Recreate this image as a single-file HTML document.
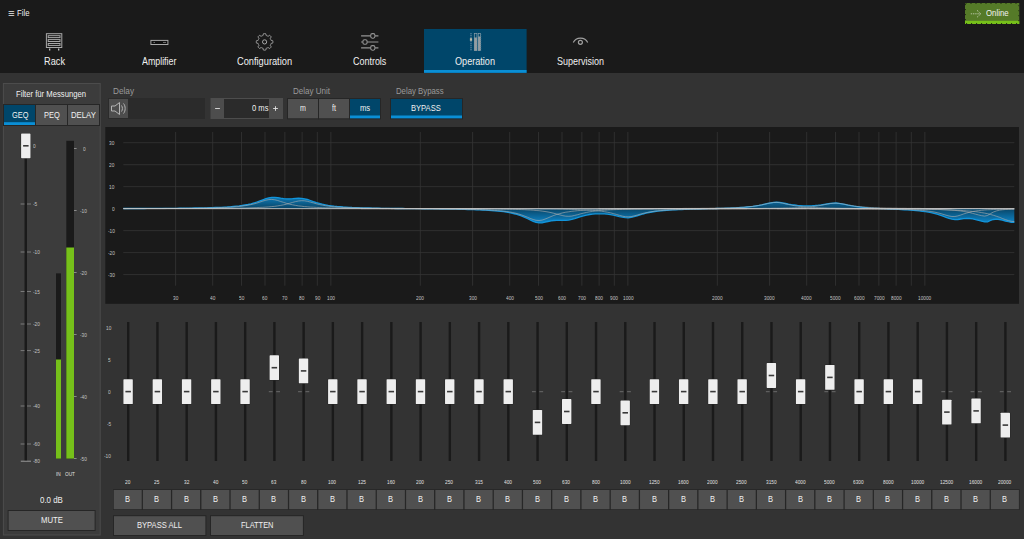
<!DOCTYPE html>
<html><head><meta charset="utf-8"><title>Operation</title><style>*{box-sizing:border-box;margin:0;padding:0}
html,body{width:1024px;height:539px;overflow:hidden;background:#333;font-family:"Liberation Sans",sans-serif;color:#e6e6e6}
svg{position:absolute;left:0;top:0}
.t{position:absolute;white-space:nowrap;line-height:1;transform-origin:0 0}
</style></head><body>
<svg width="1024" height="539" viewBox="0 0 1024 539">
<rect x="0" y="0" width="1024" height="73" fill="#1a1a1a"/>
<rect x="965" y="3" width="54.3" height="21" fill="#557a28"/>
<rect x="965" y="20.8" width="54.3" height="3.2" fill="#76c01a"/>
<path d="M965.5 3.5H1018.8V23.5H965.5Z" fill="none" stroke="#20300f" stroke-width="1" stroke-dasharray="1 4"/>
<path d="M970.8 13.8H980.5M977 10.3L980.8 13.8L977 17.3" fill="none" stroke="#b4c3a0" stroke-width="1" stroke-dasharray="1.4 0.8"/>
<rect x="424" y="29" width="102.6" height="44" fill="#00466a"/>
<rect x="424" y="70" width="102.6" height="2.8" fill="#0a8fd6"/>
<g fill="none" stroke="#a8a8a8" stroke-width="1">
<rect x="46.4" y="33.7" width="15.4" height="13.8"/>
<rect x="48.2" y="35.7" width="11.8" height="1.9" fill="#0e0e0e"/>
<rect x="48.2" y="39.6" width="11.8" height="1.9" fill="#0e0e0e"/>
<rect x="48.2" y="43.5" width="11.8" height="1.9" fill="#0e0e0e"/>
<path d="M49.7 48.4v2M58.7 48.4v2" stroke="#d0d0d0" stroke-width="1.2"/>
<rect x="150.9" y="40.4" width="17" height="4.1" fill="#101010"/>
<path d="M153.5 42.45h1.5M163 42.45h3" stroke="#707070"/>
<path d="M264.6 33.6L264.9 33.6L265.1 33.6L265.4 33.7L265.7 33.7L265.9 34.1L266.0 34.9L266.1 35.4L266.3 35.5L266.5 35.6L266.7 35.7L266.9 35.7L267.1 35.8L267.3 35.9L267.5 36.0L267.7 36.1L267.9 36.2L268.1 36.2L268.6 36.0L269.2 35.5L269.6 35.4L269.9 35.5L270.1 35.7L270.3 35.8L270.5 36.0L270.7 36.2L270.8 36.4L271.0 36.6L271.1 36.9L271.0 37.3L270.5 37.9L270.3 38.4L270.3 38.6L270.4 38.8L270.5 39.0L270.6 39.2L270.7 39.4L270.8 39.6L270.8 39.8L270.9 40.0L271.0 40.2L271.1 40.4L271.6 40.5L272.4 40.6L272.8 40.8L272.8 41.1L272.9 41.4L272.9 41.6L272.9 41.9L272.9 42.2L272.9 42.4L272.8 42.7L272.8 43.0L272.4 43.2L271.6 43.3L271.1 43.4L271.0 43.6L270.9 43.8L270.8 44.0L270.8 44.2L270.7 44.4L270.6 44.6L270.5 44.8L270.4 45.0L270.3 45.2L270.3 45.4L270.5 45.9L271.0 46.5L271.1 46.9L271.0 47.2L270.8 47.4L270.7 47.6L270.5 47.8L270.3 48.0L270.1 48.1L269.9 48.3L269.6 48.4L269.2 48.3L268.6 47.8L268.1 47.6L267.9 47.6L267.7 47.7L267.5 47.8L267.3 47.9L267.1 48.0L266.9 48.1L266.7 48.1L266.5 48.2L266.3 48.3L266.1 48.4L266.0 48.9L265.9 49.7L265.7 50.1L265.4 50.1L265.1 50.2L264.9 50.2L264.6 50.2L264.3 50.2L264.1 50.2L263.8 50.1L263.5 50.1L263.3 49.7L263.2 48.9L263.1 48.4L262.9 48.3L262.7 48.2L262.5 48.1L262.3 48.1L262.1 48.0L261.9 47.9L261.7 47.8L261.5 47.7L261.3 47.6L261.1 47.6L260.6 47.8L260.0 48.3L259.6 48.4L259.3 48.3L259.1 48.1L258.9 48.0L258.7 47.8L258.5 47.6L258.4 47.4L258.2 47.2L258.1 46.9L258.2 46.5L258.7 45.9L258.9 45.4L258.9 45.2L258.8 45.0L258.7 44.8L258.6 44.6L258.5 44.4L258.4 44.2L258.4 44.0L258.3 43.8L258.2 43.6L258.1 43.4L257.6 43.3L256.8 43.2L256.4 43.0L256.4 42.7L256.3 42.4L256.3 42.2L256.3 41.9L256.3 41.6L256.3 41.4L256.4 41.1L256.4 40.8L256.8 40.6L257.6 40.5L258.1 40.4L258.2 40.2L258.3 40.0L258.4 39.8L258.4 39.6L258.5 39.4L258.6 39.2L258.7 39.0L258.8 38.8L258.9 38.6L258.9 38.4L258.7 37.9L258.2 37.3L258.1 36.9L258.2 36.6L258.4 36.4L258.5 36.2L258.7 36.0L258.9 35.8L259.1 35.7L259.3 35.5L259.6 35.4L260.0 35.5L260.6 36.0L261.1 36.2L261.3 36.2L261.5 36.1L261.7 36.0L261.9 35.9L262.1 35.8L262.3 35.7L262.5 35.7L262.7 35.6L262.9 35.5L263.1 35.4L263.2 34.9L263.3 34.1L263.5 33.7L263.8 33.7L264.1 33.6L264.3 33.6Z"/><circle cx="264.6" cy="41.9" r="2.1"/>
<g stroke-width="1.1" stroke="#949494"><path d="M361.1 35.9h9.4M375.1 35.9h3.3M361.1 42h1.6M367.3 42h11.1M361.1 47.9h9.4M375.1 47.9h3.3"/><rect x="370.7" y="33.6" width="4.2" height="4.6" rx="1.6"/><rect x="362.9" y="39.7" width="4.2" height="4.6" rx="1.6"/><rect x="370.7" y="45.6" width="4.2" height="4.6" rx="1.6"/></g>
<path d="M471 33.2v17.4" stroke="#7f9db3" stroke-dasharray="1 1" stroke-width="1.2"/>
<rect x="469.9" y="38.2" width="2.2" height="2.6" fill="#b9b9aa" stroke="none"/>
<rect x="474.3" y="33.4" width="2.6" height="17.2" stroke="#8a9ea9" stroke-width="0.7"/><rect x="474.2" y="37.5" width="2.8" height="13.2" fill="#939da2" stroke="none"/>
<rect x="478.2" y="33.4" width="2.4" height="17.2" stroke="#8a9ea9" stroke-width="0.7"/><rect x="478.1" y="36.5" width="2.6" height="14.2" fill="#939da2" stroke="none"/>
<path d="M477.4 34v16.5M481 34v16.5" stroke="#2f6d8f" stroke-dasharray="0.8 1.2" stroke-width="0.7"/>
<g stroke-width="1.2" stroke="#a0a0a0"><path d="M573.3 42.6C576 36.6 585 36.6 587.7 42.6"/><circle cx="580.4" cy="42.3" r="2"/></g>
</g>
<rect x="2.9" y="83" width="97.8" height="452.5" fill="#4c4c4c"/>
<rect x="3.9" y="84" width="95.8" height="450.5" fill="#3c3c3c"/>
<rect x="3" y="104" width="33" height="22" fill="#262626"/>
<rect x="4" y="105" width="31" height="20" fill="#00466a"/>
<rect x="4" y="122.2" width="31" height="2.8" fill="#0a8fd6"/>
<rect x="35" y="104" width="33" height="22" fill="#262626"/>
<rect x="36" y="105" width="31" height="20" fill="#505050"/>
<rect x="67" y="104" width="33" height="22" fill="#262626"/>
<rect x="68" y="105" width="31" height="20" fill="#505050"/>
<rect x="24.5" y="146" width="2.5" height="315" fill="#1a1a1a"/>
<rect x="20.6" y="145.5" width="3.9" height="1" fill="#6fa82a"/>
<rect x="27" y="145.5" width="4" height="1" fill="#6fa82a"/>
<rect x="20.6" y="203.5" width="3.9" height="1" fill="#7a7a7a"/>
<rect x="27" y="203.5" width="4" height="1" fill="#7a7a7a"/>
<rect x="20.6" y="251.5" width="3.9" height="1" fill="#7a7a7a"/>
<rect x="27" y="251.5" width="4" height="1" fill="#7a7a7a"/>
<rect x="20.6" y="291" width="3.9" height="1" fill="#7a7a7a"/>
<rect x="27" y="291" width="4" height="1" fill="#7a7a7a"/>
<rect x="20.6" y="323.5" width="3.9" height="1" fill="#7a7a7a"/>
<rect x="27" y="323.5" width="4" height="1" fill="#7a7a7a"/>
<rect x="20.6" y="350.1" width="3.9" height="1" fill="#7a7a7a"/>
<rect x="27" y="350.1" width="4" height="1" fill="#7a7a7a"/>
<rect x="20.6" y="405.5" width="3.9" height="1" fill="#7a7a7a"/>
<rect x="27" y="405.5" width="4" height="1" fill="#7a7a7a"/>
<rect x="20.6" y="443.5" width="3.9" height="1" fill="#7a7a7a"/>
<rect x="27" y="443.5" width="4" height="1" fill="#7a7a7a"/>
<rect x="20.8" y="460.7" width="10.2" height="1" fill="#9a9a9a"/>
<rect x="20.7" y="133" width="10.2" height="25.6" fill="#242424" rx="1"/>
<rect x="21.1" y="133.4" width="9.4" height="24.8" fill="#eeeeee" rx="0.6"/>
<rect x="23.1" y="145" width="5.5" height="1.6" fill="#3a3a3a"/>
<rect x="56" y="273.4" width="5" height="185.2" fill="#1a1a1a"/>
<rect x="56" y="359.5" width="5" height="99.1" fill="#76c01a"/>
<rect x="66.3" y="140.8" width="7.7" height="317.8" fill="#1a1a1a"/>
<rect x="66.3" y="247.5" width="7.7" height="211.1" fill="#76c01a"/>
<rect x="74" y="148" width="2.6" height="1" fill="#8a8a8a"/>
<rect x="74" y="210" width="2.6" height="1" fill="#8a8a8a"/>
<rect x="74" y="272" width="2.6" height="1" fill="#8a8a8a"/>
<rect x="74" y="334" width="2.6" height="1" fill="#8a8a8a"/>
<rect x="74" y="396" width="2.6" height="1" fill="#8a8a8a"/>
<rect x="74" y="458" width="2.6" height="1" fill="#8a8a8a"/>
<rect x="7.6" y="510" width="88" height="21" fill="#262626"/>
<rect x="8.6" y="511" width="86" height="19" fill="#505050"/>
<rect x="108" y="98" width="97" height="21" fill="#2b2b2b"/>
<rect x="109" y="99" width="19" height="19" fill="#4d4d4d"/>
<g fill="none" stroke="#b4b4b4" stroke-width="1"><path d="M111.500 106v5h3.500l4.500 3.500v-12L115 106z"/><path d="M121.500 105.500c1.200 1.500 1.200 4.500 0 6M123.500 103.500c2.200 2.500 2.200 7.500 0 10"/></g>
<rect x="210.5" y="98" width="72.5" height="21" fill="#4d4d4d"/>
<rect x="224" y="99" width="45" height="19" fill="#2b2b2b"/>
<rect x="215.1" y="108.1" width="4.8" height="0.9" fill="#e0e0e0"/>
<rect x="273.1" y="108.1" width="4.8" height="0.9" fill="#e0e0e0"/>
<rect x="275.05" y="106.2" width="0.9" height="4.7" fill="#e0e0e0"/>
<rect x="287" y="98" width="32" height="21.3" fill="#262626"/>
<rect x="288" y="99" width="30" height="19.3" fill="#505050"/>
<rect x="318" y="98" width="32" height="21.3" fill="#262626"/>
<rect x="319" y="99" width="30" height="19.3" fill="#505050"/>
<rect x="349" y="98" width="32" height="21.3" fill="#262626"/>
<rect x="350" y="99" width="30" height="19.3" fill="#00466a"/>
<rect x="350" y="115.5" width="30" height="2.8" fill="#0a8fd6"/>
<rect x="390" y="98" width="73" height="21.3" fill="#262626"/>
<rect x="391" y="99" width="71" height="19.3" fill="#00466a"/>
<rect x="391" y="115.5" width="71" height="2.8" fill="#0a8fd6"/>
<rect x="105.3" y="127" width="913.7" height="176.8" fill="#1a1a1a"/>
<g stroke="#353535" stroke-width="0.8" fill="none">
<path d="M123.3 274.59H1014.3"/>
<path d="M123.3 252.61H1014.3"/>
<path d="M123.3 230.63H1014.3"/>
<path d="M123.3 208.65H1014.3"/>
<path d="M123.3 186.67H1014.3"/>
<path d="M123.3 164.69H1014.3"/>
<path d="M123.3 142.71H1014.3"/>
<path d="M175.60 132V285.7"/>
<path d="M212.71 132V285.7"/>
<path d="M241.49 132V285.7"/>
<path d="M265.01 132V285.7"/>
<path d="M284.89 132V285.7"/>
<path d="M302.11 132V285.7"/>
<path d="M317.30 132V285.7"/>
<path d="M330.89 132V285.7"/>
<path d="M420.30 132V285.7"/>
<path d="M472.60 132V285.7"/>
<path d="M509.71 132V285.7"/>
<path d="M538.49 132V285.7"/>
<path d="M562.01 132V285.7"/>
<path d="M581.89 132V285.7"/>
<path d="M599.11 132V285.7"/>
<path d="M614.30 132V285.7"/>
<path d="M627.89 132V285.7"/>
<path d="M717.30 132V285.7"/>
<path d="M769.60 132V285.7"/>
<path d="M806.71 132V285.7"/>
<path d="M835.49 132V285.7"/>
<path d="M859.01 132V285.7"/>
<path d="M878.89 132V285.7"/>
<path d="M896.11 132V285.7"/>
<path d="M911.30 132V285.7"/>
<path d="M924.89 132V285.7"/>
</g>
<defs><linearGradient id="bg" gradientUnits="userSpaceOnUse" x1="0" y1="194.4" x2="0" y2="222.9"><stop offset="0" stop-color="#0f86c8"/><stop offset="0.3" stop-color="#0b5f8e"/><stop offset="0.5" stop-color="#0a4566"/><stop offset="0.7" stop-color="#0b5f8e"/><stop offset="1" stop-color="#0f86c8"/></linearGradient></defs>
<polygon points="123.3,208.65 123.3,208.5 126.3,208.5 129.2,208.5 132.2,208.5 135.2,208.5 138.1,208.5 141.1,208.5 144.1,208.5 147.1,208.4 150.0,208.4 153.0,208.4 156.0,208.4 158.9,208.4 161.9,208.4 164.9,208.3 167.8,208.3 170.8,208.3 173.8,208.3 176.8,208.3 179.7,208.2 182.7,208.2 185.7,208.2 188.6,208.1 191.6,208.1 194.6,208.0 197.5,208.0 200.5,207.9 203.5,207.9 206.5,207.8 209.4,207.7 212.4,207.6 215.4,207.5 218.3,207.4 221.3,207.3 224.3,207.1 227.2,207.0 230.2,206.8 233.2,206.5 236.2,206.2 239.1,205.9 242.1,205.5 245.1,205.0 248.0,204.5 251.0,203.8 254.0,203.0 256.9,202.0 259.9,200.9 262.9,199.8 265.9,198.7 268.8,197.8 271.8,197.4 274.8,197.4 277.7,197.7 280.7,198.2 283.7,198.6 286.7,198.8 289.6,198.8 292.6,198.7 295.6,198.4 298.5,198.2 301.5,198.3 304.5,198.8 307.4,199.5 310.4,200.5 313.4,201.6 316.4,202.6 319.3,203.4 322.3,204.2 325.3,204.8 328.2,205.4 331.2,205.8 334.2,206.2 337.1,206.5 340.1,206.7 343.1,207.0 346.1,207.1 349.0,207.3 352.0,207.5 355.0,207.6 357.9,207.7 360.9,207.8 363.9,207.9 366.8,208.0 369.8,208.0 372.8,208.1 375.8,208.2 378.7,208.2 381.7,208.3 384.7,208.3 387.6,208.3 390.6,208.4 393.6,208.4 396.5,208.5 399.5,208.5 402.5,208.5 405.4,208.6 408.4,208.6 411.4,208.6 414.4,208.7 417.3,208.7 420.3,208.7 423.3,208.8 426.2,208.8 429.2,208.8 432.2,208.9 435.2,208.9 438.1,208.9 441.1,209.0 444.1,209.0 447.0,209.1 450.0,209.1 453.0,209.2 455.9,209.2 458.9,209.3 461.9,209.4 464.8,209.4 467.8,209.5 470.8,209.6 473.8,209.7 476.7,209.8 479.7,209.9 482.7,210.0 485.6,210.2 488.6,210.4 491.6,210.6 494.6,210.8 497.5,211.1 500.5,211.4 503.5,211.7 506.4,212.2 509.4,212.7 512.4,213.3 515.3,214.0 518.3,214.9 521.3,215.9 524.2,217.1 527.2,218.5 530.2,219.9 533.2,221.3 536.1,222.4 539.1,222.9 542.1,222.8 545.0,222.2 548.0,221.5 551.0,220.9 553.9,220.5 556.9,220.3 559.9,220.3 562.9,220.4 565.8,220.3 568.8,220.1 571.8,219.4 574.7,218.6 577.7,217.6 580.7,216.6 583.6,215.8 586.6,215.1 589.6,214.5 592.6,214.1 595.5,213.9 598.5,213.8 601.5,213.8 604.4,213.9 607.4,214.2 610.4,214.6 613.3,215.1 616.3,215.8 619.3,216.6 622.3,217.2 625.2,217.7 628.2,217.8 631.2,217.4 634.1,216.7 637.1,215.8 640.1,214.9 643.0,214.0 646.0,213.2 649.0,212.5 652.0,212.0 654.9,211.5 657.9,211.1 660.9,210.8 663.8,210.5 666.8,210.3 669.8,210.1 672.8,209.9 675.7,209.8 678.7,209.6 681.7,209.5 684.6,209.4 687.6,209.3 690.6,209.2 693.5,209.1 696.5,209.0 699.5,209.0 702.4,208.9 705.4,208.8 708.4,208.7 711.4,208.7 714.3,208.6 717.3,208.5 720.3,208.4 723.2,208.3 726.2,208.2 729.2,208.1 732.1,208.0 735.1,207.9 738.1,207.7 741.1,207.5 744.0,207.3 747.0,207.0 750.0,206.7 752.9,206.4 755.9,205.9 758.9,205.4 761.8,204.8 764.8,204.1 767.8,203.4 770.8,202.8 773.7,202.4 776.7,202.2 779.7,202.4 782.6,202.9 785.6,203.5 788.6,204.1 791.5,204.6 794.5,205.0 797.5,205.4 800.5,205.6 803.4,205.8 806.4,205.8 809.4,205.8 812.3,205.7 815.3,205.5 818.3,205.2 821.2,204.8 824.2,204.3 827.2,203.8 830.2,203.3 833.1,203.1 836.1,203.0 839.1,203.3 842.0,203.8 845.0,204.4 848.0,205.1 851.0,205.7 853.9,206.2 856.9,206.6 859.9,207.0 862.8,207.3 865.8,207.6 868.8,207.9 871.7,208.1 874.7,208.3 877.7,208.4 880.6,208.6 883.6,208.7 886.6,208.9 889.6,209.0 892.5,209.2 895.5,209.3 898.5,209.4 901.4,209.6 904.4,209.8 907.4,209.9 910.3,210.1 913.3,210.4 916.3,210.6 919.3,210.9 922.2,211.3 925.2,211.7 928.2,212.1 931.1,212.7 934.1,213.4 937.1,214.2 940.0,215.1 943.0,216.2 946.0,217.3 949.0,218.4 951.9,219.2 954.9,219.6 957.9,219.5 960.8,219.0 963.8,218.6 966.8,218.4 969.8,218.5 972.7,218.9 975.7,219.6 978.7,220.4 981.6,221.2 984.6,221.9 987.6,221.8 990.5,220.4 993.5,219.5 996.5,219.2 999.5,219.5 1002.4,220.2 1005.4,221.0 1008.4,221.7 1011.3,222.3 1014.3,222.4 1014.3,208.65" fill="url(#bg)"/>
<polyline points="123.3,208.5 126.3,208.5 129.2,208.5 132.2,208.5 135.2,208.5 138.1,208.5 141.1,208.5 144.1,208.5 147.1,208.4 150.0,208.4 153.0,208.4 156.0,208.4 158.9,208.4 161.9,208.4 164.9,208.3 167.8,208.3 170.8,208.3 173.8,208.3 176.8,208.3 179.7,208.2 182.7,208.2 185.7,208.2 188.6,208.1 191.6,208.1 194.6,208.0 197.5,208.0 200.5,207.9 203.5,207.9 206.5,207.8 209.4,207.7 212.4,207.6 215.4,207.5 218.3,207.4 221.3,207.3 224.3,207.1 227.2,207.0 230.2,206.8 233.2,206.5 236.2,206.2 239.1,205.9 242.1,205.5 245.1,205.0 248.0,204.5 251.0,203.8 254.0,203.0 256.9,202.0 259.9,200.9 262.9,199.8 265.9,198.7 268.8,197.8 271.8,197.4 274.8,197.4 277.7,197.7 280.7,198.2 283.7,198.6 286.7,198.8 289.6,198.8 292.6,198.7 295.6,198.4 298.5,198.2 301.5,198.3 304.5,198.8 307.4,199.5 310.4,200.5 313.4,201.6 316.4,202.6 319.3,203.4 322.3,204.2 325.3,204.8 328.2,205.4 331.2,205.8 334.2,206.2 337.1,206.5 340.1,206.7 343.1,207.0 346.1,207.1 349.0,207.3 352.0,207.5 355.0,207.6 357.9,207.7 360.9,207.8 363.9,207.9 366.8,208.0 369.8,208.0 372.8,208.1 375.8,208.2 378.7,208.2 381.7,208.3 384.7,208.3 387.6,208.3 390.6,208.4 393.6,208.4 396.5,208.5 399.5,208.5 402.5,208.5 405.4,208.6 408.4,208.6 411.4,208.6 414.4,208.7 417.3,208.7 420.3,208.7 423.3,208.8 426.2,208.8 429.2,208.8 432.2,208.9 435.2,208.9 438.1,208.9 441.1,209.0 444.1,209.0 447.0,209.1 450.0,209.1 453.0,209.2 455.9,209.2 458.9,209.3 461.9,209.4 464.8,209.4 467.8,209.5 470.8,209.6 473.8,209.7 476.7,209.8 479.7,209.9 482.7,210.0 485.6,210.2 488.6,210.4 491.6,210.6 494.6,210.8 497.5,211.1 500.5,211.4 503.5,211.7 506.4,212.2 509.4,212.7 512.4,213.3 515.3,214.0 518.3,214.9 521.3,215.9 524.2,217.1 527.2,218.5 530.2,219.9 533.2,221.3 536.1,222.4 539.1,222.9 542.1,222.8 545.0,222.2 548.0,221.5 551.0,220.9 553.9,220.5 556.9,220.3 559.9,220.3 562.9,220.4 565.8,220.3 568.8,220.1 571.8,219.4 574.7,218.6 577.7,217.6 580.7,216.6 583.6,215.8 586.6,215.1 589.6,214.5 592.6,214.1 595.5,213.9 598.5,213.8 601.5,213.8 604.4,213.9 607.4,214.2 610.4,214.6 613.3,215.1 616.3,215.8 619.3,216.6 622.3,217.2 625.2,217.7 628.2,217.8 631.2,217.4 634.1,216.7 637.1,215.8 640.1,214.9 643.0,214.0 646.0,213.2 649.0,212.5 652.0,212.0 654.9,211.5 657.9,211.1 660.9,210.8 663.8,210.5 666.8,210.3 669.8,210.1 672.8,209.9 675.7,209.8 678.7,209.6 681.7,209.5 684.6,209.4 687.6,209.3 690.6,209.2 693.5,209.1 696.5,209.0 699.5,209.0 702.4,208.9 705.4,208.8 708.4,208.7 711.4,208.7 714.3,208.6 717.3,208.5 720.3,208.4 723.2,208.3 726.2,208.2 729.2,208.1 732.1,208.0 735.1,207.9 738.1,207.7 741.1,207.5 744.0,207.3 747.0,207.0 750.0,206.7 752.9,206.4 755.9,205.9 758.9,205.4 761.8,204.8 764.8,204.1 767.8,203.4 770.8,202.8 773.7,202.4 776.7,202.2 779.7,202.4 782.6,202.9 785.6,203.5 788.6,204.1 791.5,204.6 794.5,205.0 797.5,205.4 800.5,205.6 803.4,205.8 806.4,205.8 809.4,205.8 812.3,205.7 815.3,205.5 818.3,205.2 821.2,204.8 824.2,204.3 827.2,203.8 830.2,203.3 833.1,203.1 836.1,203.0 839.1,203.3 842.0,203.8 845.0,204.4 848.0,205.1 851.0,205.7 853.9,206.2 856.9,206.6 859.9,207.0 862.8,207.3 865.8,207.6 868.8,207.9 871.7,208.1 874.7,208.3 877.7,208.4 880.6,208.6 883.6,208.7 886.6,208.9 889.6,209.0 892.5,209.2 895.5,209.3 898.5,209.4 901.4,209.6 904.4,209.8 907.4,209.9 910.3,210.1 913.3,210.4 916.3,210.6 919.3,210.9 922.2,211.3 925.2,211.7 928.2,212.1 931.1,212.7 934.1,213.4 937.1,214.2 940.0,215.1 943.0,216.2 946.0,217.3 949.0,218.4 951.9,219.2 954.9,219.6 957.9,219.5 960.8,219.0 963.8,218.6 966.8,218.4 969.8,218.5 972.7,218.9 975.7,219.6 978.7,220.4 981.6,221.2 984.6,221.9 987.6,221.8 990.5,220.4 993.5,219.5 996.5,219.2 999.5,219.5 1002.4,220.2 1005.4,221.0 1008.4,221.7 1011.3,222.3 1014.3,222.4" fill="none" stroke="#1295dc" stroke-width="1.3"/>
<polyline points="123.3,208.6 126.3,208.6 129.2,208.5 132.2,208.5 135.2,208.5 138.1,208.5 141.1,208.5 144.1,208.5 147.1,208.5 150.0,208.5 153.0,208.5 156.0,208.5 158.9,208.5 161.9,208.5 164.9,208.4 167.8,208.4 170.8,208.4 173.8,208.4 176.8,208.4 179.7,208.3 182.7,208.3 185.7,208.3 188.6,208.3 191.6,208.2 194.6,208.2 197.5,208.2 200.5,208.1 203.5,208.1 206.5,208.0 209.4,208.0 212.4,207.9 215.4,207.8 218.3,207.7 221.3,207.6 224.3,207.5 227.2,207.4 230.2,207.2 233.2,207.0 236.2,206.7 239.1,206.5 242.1,206.1 245.1,205.7 248.0,205.2 251.0,204.6 254.0,203.9 256.9,203.1 259.9,202.1 262.9,201.1 265.9,200.2 268.8,199.6 271.8,199.4 274.8,199.8 277.7,200.5 280.7,201.5 283.7,202.4 286.7,203.4 289.6,204.2 292.6,204.8 295.6,205.4 298.5,205.9 301.5,206.2 304.5,206.6 307.4,206.8 310.4,207.1 313.4,207.2 316.4,207.4 319.3,207.5 322.3,207.7 325.3,207.8 328.2,207.8 331.2,207.9 334.2,208.0 337.1,208.0 340.1,208.1 343.1,208.1 346.1,208.2 349.0,208.2 352.0,208.3 355.0,208.3 357.9,208.3 360.9,208.3 363.9,208.4 366.8,208.4 369.8,208.4 372.8,208.4 375.8,208.4 378.7,208.4 381.7,208.5 384.7,208.5 387.6,208.5 390.6,208.5 393.6,208.5 396.5,208.5 399.5,208.5 402.5,208.5 405.4,208.5 408.4,208.5 411.4,208.5 414.4,208.5 417.3,208.6 420.3,208.6 423.3,208.6 426.2,208.6 429.2,208.6 432.2,208.6 435.2,208.6 438.1,208.6 441.1,208.6 444.1,208.6 447.0,208.6 450.0,208.6" fill="none" stroke="#b0b0b0" stroke-width="0.6"/>
<polyline points="123.3,208.6 126.3,208.6 129.2,208.6 132.2,208.6 135.2,208.6 138.1,208.6 141.1,208.6 144.1,208.6 147.1,208.6 150.0,208.6 153.0,208.6 156.0,208.6 158.9,208.6 161.9,208.6 164.9,208.6 167.8,208.5 170.8,208.5 173.8,208.5 176.8,208.5 179.7,208.5 182.7,208.5 185.7,208.5 188.6,208.5 191.6,208.5 194.6,208.5 197.5,208.5 200.5,208.4 203.5,208.4 206.5,208.4 209.4,208.4 212.4,208.4 215.4,208.4 218.3,208.3 221.3,208.3 224.3,208.3 227.2,208.3 230.2,208.2 233.2,208.2 236.2,208.1 239.1,208.1 242.1,208.0 245.1,208.0 248.0,207.9 251.0,207.8 254.0,207.7 256.9,207.6 259.9,207.4 262.9,207.3 265.9,207.1 268.8,206.9 271.8,206.6 274.8,206.3 277.7,205.9 280.7,205.4 283.7,204.8 286.7,204.1 289.6,203.3 292.6,202.4 295.6,201.6 298.5,201.0 301.5,200.7 304.5,200.8 307.4,201.3 310.4,202.1 313.4,202.9 316.4,203.8 319.3,204.5 322.3,205.1 325.3,205.7 328.2,206.1 331.2,206.5 334.2,206.8 337.1,207.0 340.1,207.2 343.1,207.4 346.1,207.5 349.0,207.7 352.0,207.8 355.0,207.8 357.9,207.9 360.9,208.0 363.9,208.1 366.8,208.1 369.8,208.2 372.8,208.2 375.8,208.2 378.7,208.3 381.7,208.3 384.7,208.3 387.6,208.3 390.6,208.4 393.6,208.4 396.5,208.4 399.5,208.4 402.5,208.4 405.4,208.5 408.4,208.5 411.4,208.5 414.4,208.5 417.3,208.5 420.3,208.5 423.3,208.5 426.2,208.5 429.2,208.5 432.2,208.5 435.2,208.5 438.1,208.6 441.1,208.6 444.1,208.6 447.0,208.6 450.0,208.6 453.0,208.6 455.9,208.6 458.9,208.6 461.9,208.6 464.8,208.6 467.8,208.6 470.8,208.6 473.8,208.6 476.7,208.6 479.7,208.6" fill="none" stroke="#b0b0b0" stroke-width="0.6"/>
<polyline points="360.9,208.7 363.9,208.7 366.8,208.7 369.8,208.7 372.8,208.7 375.8,208.7 378.7,208.7 381.7,208.8 384.7,208.8 387.6,208.8 390.6,208.8 393.6,208.8 396.5,208.8 399.5,208.8 402.5,208.8 405.4,208.8 408.4,208.8 411.4,208.8 414.4,208.8 417.3,208.9 420.3,208.9 423.3,208.9 426.2,208.9 429.2,208.9 432.2,208.9 435.2,209.0 438.1,209.0 441.1,209.0 444.1,209.0 447.0,209.0 450.0,209.1 453.0,209.1 455.9,209.1 458.9,209.2 461.9,209.2 464.8,209.3 467.8,209.3 470.8,209.4 473.8,209.5 476.7,209.6 479.7,209.6 482.7,209.8 485.6,209.9 488.6,210.0 491.6,210.2 494.6,210.4 497.5,210.6 500.5,210.8 503.5,211.1 506.4,211.5 509.4,211.9 512.4,212.5 515.3,213.1 518.3,213.9 521.3,214.8 524.2,215.9 527.2,217.1 530.2,218.4 533.2,219.5 536.1,220.3 539.1,220.5 542.1,220.1 545.0,219.1 548.0,217.9 551.0,216.6 553.9,215.4 556.9,214.4 559.9,213.6 562.9,212.8 565.8,212.2 568.8,211.8 571.8,211.3 574.7,211.0 577.7,210.7 580.7,210.5 583.6,210.3 586.6,210.1 589.6,209.9 592.6,209.8 595.5,209.7 598.5,209.6 601.5,209.5 604.4,209.4 607.4,209.4 610.4,209.3 613.3,209.3 616.3,209.2 619.3,209.2 622.3,209.1 625.2,209.1 628.2,209.1 631.2,209.0 634.1,209.0 637.1,209.0 640.1,209.0 643.0,208.9 646.0,208.9 649.0,208.9 652.0,208.9 654.9,208.9 657.9,208.9 660.9,208.8 663.8,208.8 666.8,208.8 669.8,208.8 672.8,208.8 675.7,208.8 678.7,208.8 681.7,208.8 684.6,208.8 687.6,208.8 690.6,208.8 693.5,208.8 696.5,208.8 699.5,208.7 702.4,208.7 705.4,208.7 708.4,208.7 711.4,208.7 714.3,208.7 717.3,208.7" fill="none" stroke="#b0b0b0" stroke-width="0.6"/>
<polyline points="390.6,208.7 393.6,208.7 396.5,208.7 399.5,208.7 402.5,208.7 405.4,208.7 408.4,208.7 411.4,208.7 414.4,208.7 417.3,208.7 420.3,208.7 423.3,208.7 426.2,208.7 429.2,208.7 432.2,208.7 435.2,208.8 438.1,208.8 441.1,208.8 444.1,208.8 447.0,208.8 450.0,208.8 453.0,208.8 455.9,208.8 458.9,208.8 461.9,208.8 464.8,208.8 467.8,208.9 470.8,208.9 473.8,208.9 476.7,208.9 479.7,208.9 482.7,208.9 485.6,209.0 488.6,209.0 491.6,209.0 494.6,209.0 497.5,209.1 500.5,209.1 503.5,209.2 506.4,209.2 509.4,209.3 512.4,209.3 515.3,209.4 518.3,209.5 521.3,209.6 524.2,209.7 527.2,209.9 530.2,210.0 533.2,210.2 536.1,210.5 539.1,210.7 542.1,211.1 545.0,211.5 548.0,212.0 551.0,212.6 553.9,213.3 556.9,214.1 559.9,214.9 562.9,215.7 565.8,216.2 568.8,216.3 571.8,216.1 574.7,215.4 577.7,214.7 580.7,213.8 583.6,213.1 586.6,212.4 589.6,211.8 592.6,211.4 595.5,211.0 598.5,210.6 601.5,210.4 604.4,210.2 607.4,210.0 610.4,209.8 613.3,209.7 616.3,209.6 619.3,209.5 622.3,209.4 625.2,209.3 628.2,209.3 631.2,209.2 634.1,209.1 637.1,209.1 640.1,209.1 643.0,209.0 646.0,209.0 649.0,209.0 652.0,209.0 654.9,208.9 657.9,208.9 660.9,208.9 663.8,208.9 666.8,208.9 669.8,208.8 672.8,208.8 675.7,208.8 678.7,208.8 681.7,208.8 684.6,208.8 687.6,208.8 690.6,208.8 693.5,208.8 696.5,208.8 699.5,208.8 702.4,208.7 705.4,208.7 708.4,208.7 711.4,208.7 714.3,208.7 717.3,208.7 720.3,208.7 723.2,208.7 726.2,208.7 729.2,208.7 732.1,208.7 735.1,208.7 738.1,208.7 741.1,208.7 744.0,208.7 747.0,208.7" fill="none" stroke="#b0b0b0" stroke-width="0.6"/>
<polyline points="450.0,208.7 453.0,208.7 455.9,208.7 458.9,208.7 461.9,208.7 464.8,208.7 467.8,208.7 470.8,208.7 473.8,208.7 476.7,208.7 479.7,208.7 482.7,208.7 485.6,208.7 488.6,208.7 491.6,208.8 494.6,208.8 497.5,208.8 500.5,208.8 503.5,208.8 506.4,208.8 509.4,208.8 512.4,208.8 515.3,208.8 518.3,208.8 521.3,208.8 524.2,208.8 527.2,208.9 530.2,208.9 533.2,208.9 536.1,208.9 539.1,208.9 542.1,209.0 545.0,209.0 548.0,209.0 551.0,209.0 553.9,209.1 556.9,209.1 559.9,209.2 562.9,209.2 565.8,209.3 568.8,209.3 571.8,209.4 574.7,209.5 577.7,209.6 580.7,209.7 583.6,209.8 586.6,209.9 589.6,210.1 592.6,210.3 595.5,210.6 598.5,210.9 601.5,211.2 604.4,211.7 607.4,212.2 610.4,212.8 613.3,213.6 616.3,214.4 619.3,215.3 622.3,216.1 625.2,216.7 628.2,216.8 631.2,216.6 634.1,215.9 637.1,215.1 640.1,214.2 643.0,213.4 646.0,212.7 649.0,212.1 652.0,211.6 654.9,211.1 657.9,210.8 660.9,210.5 663.8,210.3 666.8,210.1 669.8,209.9 672.8,209.8 675.7,209.6 678.7,209.5 681.7,209.4 684.6,209.4 687.6,209.3 690.6,209.2 693.5,209.2 696.5,209.1 699.5,209.1 702.4,209.1 705.4,209.0 708.4,209.0 711.4,209.0 714.3,209.0 717.3,208.9 720.3,208.9 723.2,208.9 726.2,208.9 729.2,208.9 732.1,208.8 735.1,208.8 738.1,208.8 741.1,208.8 744.0,208.8 747.0,208.8 750.0,208.8 752.9,208.8 755.9,208.8 758.9,208.8 761.8,208.8 764.8,208.7 767.8,208.7 770.8,208.7 773.7,208.7 776.7,208.7 779.7,208.7 782.6,208.7 785.6,208.7 788.6,208.7 791.5,208.7 794.5,208.7 797.5,208.7 800.5,208.7 803.4,208.7 806.4,208.7" fill="none" stroke="#b0b0b0" stroke-width="0.6"/>
<polyline points="598.5,208.6 601.5,208.6 604.4,208.6 607.4,208.6 610.4,208.6 613.3,208.6 616.3,208.6 619.3,208.6 622.3,208.6 625.2,208.6 628.2,208.6 631.2,208.6 634.1,208.6 637.1,208.6 640.1,208.6 643.0,208.6 646.0,208.6 649.0,208.6 652.0,208.6 654.9,208.5 657.9,208.5 660.9,208.5 663.8,208.5 666.8,208.5 669.8,208.5 672.8,208.5 675.7,208.5 678.7,208.5 681.7,208.5 684.6,208.4 687.6,208.4 690.6,208.4 693.5,208.4 696.5,208.4 699.5,208.4 702.4,208.3 705.4,208.3 708.4,208.3 711.4,208.2 714.3,208.2 717.3,208.1 720.3,208.1 723.2,208.0 726.2,208.0 729.2,207.9 732.1,207.8 735.1,207.7 738.1,207.5 741.1,207.4 744.0,207.2 747.0,206.9 750.0,206.6 752.9,206.3 755.9,205.9 758.9,205.4 761.8,204.8 764.8,204.2 767.8,203.5 770.8,202.9 773.7,202.5 776.7,202.4 779.7,202.7 782.6,203.2 785.6,203.9 788.6,204.5 791.5,205.1 794.5,205.7 797.5,206.1 800.5,206.5 803.4,206.8 806.4,207.1 809.4,207.3 812.3,207.5 815.3,207.6 818.3,207.7 821.2,207.8 824.2,207.9 827.2,208.0 830.2,208.1 833.1,208.1 836.1,208.2 839.1,208.2 842.0,208.3 845.0,208.3 848.0,208.3 851.0,208.3 853.9,208.4 856.9,208.4 859.9,208.4 862.8,208.4 865.8,208.4 868.8,208.5 871.7,208.5 874.7,208.5 877.7,208.5 880.6,208.5 883.6,208.5 886.6,208.5 889.6,208.5 892.5,208.5 895.5,208.5 898.5,208.6 901.4,208.6 904.4,208.6 907.4,208.6 910.3,208.6 913.3,208.6 916.3,208.6 919.3,208.6 922.2,208.6 925.2,208.6 928.2,208.6 931.1,208.6 934.1,208.6 937.1,208.6 940.0,208.6 943.0,208.6 946.0,208.6 949.0,208.6 951.9,208.6" fill="none" stroke="#b0b0b0" stroke-width="0.6"/>
<polyline points="657.9,208.6 660.9,208.6 663.8,208.6 666.8,208.6 669.8,208.6 672.8,208.6 675.7,208.6 678.7,208.6 681.7,208.6 684.6,208.6 687.6,208.6 690.6,208.6 693.5,208.6 696.5,208.6 699.5,208.6 702.4,208.6 705.4,208.6 708.4,208.6 711.4,208.6 714.3,208.6 717.3,208.6 720.3,208.5 723.2,208.5 726.2,208.5 729.2,208.5 732.1,208.5 735.1,208.5 738.1,208.5 741.1,208.5 744.0,208.5 747.0,208.5 750.0,208.4 752.9,208.4 755.9,208.4 758.9,208.4 761.8,208.4 764.8,208.3 767.8,208.3 770.8,208.3 773.7,208.2 776.7,208.2 779.7,208.2 782.6,208.1 785.6,208.0 788.6,208.0 791.5,207.9 794.5,207.8 797.5,207.7 800.5,207.5 803.4,207.4 806.4,207.2 809.4,206.9 812.3,206.6 815.3,206.2 818.3,205.8 821.2,205.3 824.2,204.7 827.2,204.1 830.2,203.6 833.1,203.3 836.1,203.2 839.1,203.4 842.0,203.8 845.0,204.4 848.0,205.0 851.0,205.5 853.9,206.0 856.9,206.4 859.9,206.7 862.8,207.0 865.8,207.2 868.8,207.4 871.7,207.6 874.7,207.7 877.7,207.8 880.6,207.9 883.6,208.0 886.6,208.1 889.6,208.1 892.5,208.2 895.5,208.2 898.5,208.3 901.4,208.3 904.4,208.3 907.4,208.4 910.3,208.4 913.3,208.4 916.3,208.4 919.3,208.4 922.2,208.5 925.2,208.5 928.2,208.5 931.1,208.5 934.1,208.5 937.1,208.5 940.0,208.5 943.0,208.5 946.0,208.5 949.0,208.5 951.9,208.6 954.9,208.6 957.9,208.6 960.8,208.6 963.8,208.6 966.8,208.6 969.8,208.6 972.7,208.6 975.7,208.6 978.7,208.6 981.6,208.6 984.6,208.6 987.6,208.6 990.5,208.6 993.5,208.6 996.5,208.6 999.5,208.6 1002.4,208.6 1005.4,208.6 1008.4,208.6 1011.3,208.6 1014.3,208.6" fill="none" stroke="#b0b0b0" stroke-width="0.6"/>
<polyline points="776.7,208.7 779.7,208.7 782.6,208.7 785.6,208.7 788.6,208.7 791.5,208.7 794.5,208.7 797.5,208.7 800.5,208.7 803.4,208.7 806.4,208.7 809.4,208.7 812.3,208.7 815.3,208.7 818.3,208.7 821.2,208.7 824.2,208.7 827.2,208.8 830.2,208.8 833.1,208.8 836.1,208.8 839.1,208.8 842.0,208.8 845.0,208.8 848.0,208.8 851.0,208.8 853.9,208.8 856.9,208.9 859.9,208.9 862.8,208.9 865.8,208.9 868.8,208.9 871.7,208.9 874.7,209.0 877.7,209.0 880.6,209.0 883.6,209.1 886.6,209.1 889.6,209.1 892.5,209.2 895.5,209.2 898.5,209.3 901.4,209.4 904.4,209.5 907.4,209.6 910.3,209.7 913.3,209.8 916.3,210.0 919.3,210.2 922.2,210.4 925.2,210.7 928.2,211.1 931.1,211.5 934.1,212.0 937.1,212.7 940.0,213.4 943.0,214.3 946.0,215.2 949.0,216.0 951.9,216.5 954.9,216.5 957.9,215.9 960.8,215.0 963.8,213.9 966.8,213.0 969.8,212.2 972.7,211.5 975.7,211.0 978.7,210.6 981.6,210.3 984.6,210.0 987.6,209.8 990.5,209.7 993.5,209.5 996.5,209.4 999.5,209.3 1002.4,209.3 1005.4,209.2 1008.4,209.1 1011.3,209.1 1014.3,209.1" fill="none" stroke="#b0b0b0" stroke-width="0.6"/>
<polyline points="809.4,208.7 812.3,208.7 815.3,208.7 818.3,208.7 821.2,208.7 824.2,208.7 827.2,208.7 830.2,208.7 833.1,208.7 836.1,208.7 839.1,208.7 842.0,208.7 845.0,208.7 848.0,208.7 851.0,208.7 853.9,208.7 856.9,208.7 859.9,208.8 862.8,208.8 865.8,208.8 868.8,208.8 871.7,208.8 874.7,208.8 877.7,208.8 880.6,208.8 883.6,208.8 886.6,208.8 889.6,208.8 892.5,208.9 895.5,208.9 898.5,208.9 901.4,208.9 904.4,208.9 907.4,209.0 910.3,209.0 913.3,209.0 916.3,209.0 919.3,209.1 922.2,209.1 925.2,209.2 928.2,209.2 931.1,209.3 934.1,209.4 937.1,209.4 940.0,209.5 943.0,209.7 946.0,209.8 949.0,210.0 951.9,210.2 954.9,210.4 957.9,210.7 960.8,211.0 963.8,211.5 966.8,212.0 969.8,212.6 972.7,213.4 975.7,214.2 978.7,215.0 981.6,215.7 984.6,216.1 987.6,215.5 990.5,213.6 993.5,212.0 996.5,210.9 999.5,210.2 1002.4,209.8 1005.4,209.5 1008.4,209.3 1011.3,209.2 1014.3,209.1" fill="none" stroke="#b0b0b0" stroke-width="0.6"/>
<polyline points="836.1,208.8 839.1,208.8 842.0,208.8 845.0,208.8 848.0,208.8 851.0,208.8 853.9,208.8 856.9,208.8 859.9,208.8 862.8,208.8 865.8,208.8 868.8,208.8 871.7,208.9 874.7,208.9 877.7,208.9 880.6,208.9 883.6,208.9 886.6,208.9 889.6,208.9 892.5,209.0 895.5,209.0 898.5,209.0 901.4,209.0 904.4,209.1 907.4,209.1 910.3,209.1 913.3,209.1 916.3,209.2 919.3,209.2 922.2,209.3 925.2,209.3 928.2,209.4 931.1,209.4 934.1,209.5 937.1,209.5 940.0,209.6 943.0,209.7 946.0,209.8 949.0,209.9 951.9,210.0 954.9,210.1 957.9,210.3 960.8,210.4 963.8,210.6 966.8,210.9 969.8,211.1 972.7,211.4 975.7,211.7 978.7,212.1 981.6,212.6 984.6,213.1 987.6,213.7 990.5,214.5 993.5,215.3 996.5,216.3 999.5,217.3 1002.4,218.5 1005.4,219.6 1008.4,220.6 1011.3,221.3 1014.3,221.6" fill="none" stroke="#b0b0b0" stroke-width="0.6"/>
<path d="M123.3 208.65H1014.3" stroke="#c8c8c8" stroke-width="0.9"/>
<rect x="127" y="322" width="2.4" height="139" fill="#1a1a1a"/>
<rect x="123" y="378.8" width="10.2" height="25.6" fill="#242424" rx="1"/>
<rect x="123.4" y="379.2" width="9.4" height="24.8" fill="#eeeeee" rx="0.6"/>
<rect x="125.4" y="390.8" width="5.5" height="1.6" fill="#3a3a3a"/>
<rect x="113" y="489.2" width="29.5" height="20.8" fill="#262626"/>
<rect x="113.7" y="490" width="28" height="19.2" fill="#505050"/>
<rect x="156.24" y="322" width="2.4" height="139" fill="#1a1a1a"/>
<rect x="152.24" y="378.8" width="10.2" height="25.6" fill="#242424" rx="1"/>
<rect x="152.64" y="379.2" width="9.4" height="24.8" fill="#eeeeee" rx="0.6"/>
<rect x="154.64" y="390.8" width="5.5" height="1.6" fill="#3a3a3a"/>
<rect x="142.24" y="489.2" width="29.5" height="20.8" fill="#262626"/>
<rect x="142.94" y="490" width="28" height="19.2" fill="#505050"/>
<rect x="185.48" y="322" width="2.4" height="139" fill="#1a1a1a"/>
<rect x="181.48" y="378.8" width="10.2" height="25.6" fill="#242424" rx="1"/>
<rect x="181.88" y="379.2" width="9.4" height="24.8" fill="#eeeeee" rx="0.6"/>
<rect x="183.88" y="390.8" width="5.5" height="1.6" fill="#3a3a3a"/>
<rect x="171.48" y="489.2" width="29.5" height="20.8" fill="#262626"/>
<rect x="172.18" y="490" width="28" height="19.2" fill="#505050"/>
<rect x="214.72" y="322" width="2.4" height="139" fill="#1a1a1a"/>
<rect x="210.72" y="378.8" width="10.2" height="25.6" fill="#242424" rx="1"/>
<rect x="211.12" y="379.2" width="9.4" height="24.8" fill="#eeeeee" rx="0.6"/>
<rect x="213.12" y="390.8" width="5.5" height="1.6" fill="#3a3a3a"/>
<rect x="200.72" y="489.2" width="29.5" height="20.8" fill="#262626"/>
<rect x="201.42" y="490" width="28" height="19.2" fill="#505050"/>
<rect x="243.96" y="322" width="2.4" height="139" fill="#1a1a1a"/>
<rect x="239.96" y="378.8" width="10.2" height="25.6" fill="#242424" rx="1"/>
<rect x="240.36" y="379.2" width="9.4" height="24.8" fill="#eeeeee" rx="0.6"/>
<rect x="242.36" y="390.8" width="5.5" height="1.6" fill="#3a3a3a"/>
<rect x="229.96" y="489.2" width="29.5" height="20.8" fill="#262626"/>
<rect x="230.66" y="490" width="28" height="19.2" fill="#505050"/>
<rect x="273.2" y="322" width="2.4" height="139" fill="#1a1a1a"/>
<rect x="268.8" y="391.2" width="3.8" height="1" fill="#6a6a6a"/>
<rect x="276.2" y="391.2" width="3.8" height="1" fill="#6a6a6a"/>
<rect x="269.2" y="354.9" width="10.2" height="25.6" fill="#242424" rx="1"/>
<rect x="269.6" y="355.3" width="9.4" height="24.8" fill="#eeeeee" rx="0.6"/>
<rect x="271.6" y="366.9" width="5.5" height="1.6" fill="#3a3a3a"/>
<rect x="259.2" y="489.2" width="29.5" height="20.8" fill="#262626"/>
<rect x="259.9" y="490" width="28" height="19.2" fill="#505050"/>
<rect x="302.44" y="322" width="2.4" height="139" fill="#1a1a1a"/>
<rect x="298.04" y="391.2" width="3.8" height="1" fill="#6a6a6a"/>
<rect x="305.44" y="391.2" width="3.8" height="1" fill="#6a6a6a"/>
<rect x="298.44" y="358.1" width="10.2" height="25.6" fill="#242424" rx="1"/>
<rect x="298.84" y="358.5" width="9.4" height="24.8" fill="#eeeeee" rx="0.6"/>
<rect x="300.84" y="370.1" width="5.5" height="1.6" fill="#3a3a3a"/>
<rect x="288.44" y="489.2" width="29.5" height="20.8" fill="#262626"/>
<rect x="289.14" y="490" width="28" height="19.2" fill="#505050"/>
<rect x="331.68" y="322" width="2.4" height="139" fill="#1a1a1a"/>
<rect x="327.68" y="378.8" width="10.2" height="25.6" fill="#242424" rx="1"/>
<rect x="328.08" y="379.2" width="9.4" height="24.8" fill="#eeeeee" rx="0.6"/>
<rect x="330.08" y="390.8" width="5.5" height="1.6" fill="#3a3a3a"/>
<rect x="317.68" y="489.2" width="29.5" height="20.8" fill="#262626"/>
<rect x="318.38" y="490" width="28" height="19.2" fill="#505050"/>
<rect x="360.92" y="322" width="2.4" height="139" fill="#1a1a1a"/>
<rect x="356.92" y="378.8" width="10.2" height="25.6" fill="#242424" rx="1"/>
<rect x="357.32" y="379.2" width="9.4" height="24.8" fill="#eeeeee" rx="0.6"/>
<rect x="359.32" y="390.8" width="5.5" height="1.6" fill="#3a3a3a"/>
<rect x="346.92" y="489.2" width="29.5" height="20.8" fill="#262626"/>
<rect x="347.62" y="490" width="28" height="19.2" fill="#505050"/>
<rect x="390.16" y="322" width="2.4" height="139" fill="#1a1a1a"/>
<rect x="386.16" y="378.8" width="10.2" height="25.6" fill="#242424" rx="1"/>
<rect x="386.56" y="379.2" width="9.4" height="24.8" fill="#eeeeee" rx="0.6"/>
<rect x="388.56" y="390.8" width="5.5" height="1.6" fill="#3a3a3a"/>
<rect x="376.16" y="489.2" width="29.5" height="20.8" fill="#262626"/>
<rect x="376.86" y="490" width="28" height="19.2" fill="#505050"/>
<rect x="419.4" y="322" width="2.4" height="139" fill="#1a1a1a"/>
<rect x="415.4" y="378.8" width="10.2" height="25.6" fill="#242424" rx="1"/>
<rect x="415.8" y="379.2" width="9.4" height="24.8" fill="#eeeeee" rx="0.6"/>
<rect x="417.8" y="390.8" width="5.5" height="1.6" fill="#3a3a3a"/>
<rect x="405.4" y="489.2" width="29.5" height="20.8" fill="#262626"/>
<rect x="406.1" y="490" width="28" height="19.2" fill="#505050"/>
<rect x="448.64" y="322" width="2.4" height="139" fill="#1a1a1a"/>
<rect x="444.64" y="378.8" width="10.2" height="25.6" fill="#242424" rx="1"/>
<rect x="445.04" y="379.2" width="9.4" height="24.8" fill="#eeeeee" rx="0.6"/>
<rect x="447.04" y="390.8" width="5.5" height="1.6" fill="#3a3a3a"/>
<rect x="434.64" y="489.2" width="29.5" height="20.8" fill="#262626"/>
<rect x="435.34" y="490" width="28" height="19.2" fill="#505050"/>
<rect x="477.88" y="322" width="2.4" height="139" fill="#1a1a1a"/>
<rect x="473.88" y="378.8" width="10.2" height="25.6" fill="#242424" rx="1"/>
<rect x="474.28" y="379.2" width="9.4" height="24.8" fill="#eeeeee" rx="0.6"/>
<rect x="476.28" y="390.8" width="5.5" height="1.6" fill="#3a3a3a"/>
<rect x="463.88" y="489.2" width="29.5" height="20.8" fill="#262626"/>
<rect x="464.58" y="490" width="28" height="19.2" fill="#505050"/>
<rect x="507.12" y="322" width="2.4" height="139" fill="#1a1a1a"/>
<rect x="503.12" y="378.8" width="10.2" height="25.6" fill="#242424" rx="1"/>
<rect x="503.52" y="379.2" width="9.4" height="24.8" fill="#eeeeee" rx="0.6"/>
<rect x="505.52" y="390.8" width="5.5" height="1.6" fill="#3a3a3a"/>
<rect x="493.12" y="489.2" width="29.5" height="20.8" fill="#262626"/>
<rect x="493.82" y="490" width="28" height="19.2" fill="#505050"/>
<rect x="536.36" y="322" width="2.4" height="139" fill="#1a1a1a"/>
<rect x="531.96" y="391.2" width="3.8" height="1" fill="#6a6a6a"/>
<rect x="539.36" y="391.2" width="3.8" height="1" fill="#6a6a6a"/>
<rect x="532.36" y="409.6" width="10.2" height="25.6" fill="#242424" rx="1"/>
<rect x="532.76" y="410" width="9.4" height="24.8" fill="#eeeeee" rx="0.6"/>
<rect x="534.76" y="421.6" width="5.5" height="1.6" fill="#3a3a3a"/>
<rect x="522.36" y="489.2" width="29.5" height="20.8" fill="#262626"/>
<rect x="523.06" y="490" width="28" height="19.2" fill="#505050"/>
<rect x="565.6" y="322" width="2.4" height="139" fill="#1a1a1a"/>
<rect x="561.2" y="391.2" width="3.8" height="1" fill="#6a6a6a"/>
<rect x="568.6" y="391.2" width="3.8" height="1" fill="#6a6a6a"/>
<rect x="561.6" y="398.7" width="10.2" height="25.6" fill="#242424" rx="1"/>
<rect x="562" y="399.1" width="9.4" height="24.8" fill="#eeeeee" rx="0.6"/>
<rect x="564" y="410.7" width="5.5" height="1.6" fill="#3a3a3a"/>
<rect x="551.6" y="489.2" width="29.5" height="20.8" fill="#262626"/>
<rect x="552.3" y="490" width="28" height="19.2" fill="#505050"/>
<rect x="594.84" y="322" width="2.4" height="139" fill="#1a1a1a"/>
<rect x="590.84" y="378.8" width="10.2" height="25.6" fill="#242424" rx="1"/>
<rect x="591.24" y="379.2" width="9.4" height="24.8" fill="#eeeeee" rx="0.6"/>
<rect x="593.24" y="390.8" width="5.5" height="1.6" fill="#3a3a3a"/>
<rect x="580.84" y="489.2" width="29.5" height="20.8" fill="#262626"/>
<rect x="581.54" y="490" width="28" height="19.2" fill="#505050"/>
<rect x="624.08" y="322" width="2.4" height="139" fill="#1a1a1a"/>
<rect x="619.68" y="391.2" width="3.8" height="1" fill="#6a6a6a"/>
<rect x="627.08" y="391.2" width="3.8" height="1" fill="#6a6a6a"/>
<rect x="620.08" y="400" width="10.2" height="25.6" fill="#242424" rx="1"/>
<rect x="620.48" y="400.4" width="9.4" height="24.8" fill="#eeeeee" rx="0.6"/>
<rect x="622.48" y="412" width="5.5" height="1.6" fill="#3a3a3a"/>
<rect x="610.08" y="489.2" width="29.5" height="20.8" fill="#262626"/>
<rect x="610.78" y="490" width="28" height="19.2" fill="#505050"/>
<rect x="653.32" y="322" width="2.4" height="139" fill="#1a1a1a"/>
<rect x="649.32" y="378.8" width="10.2" height="25.6" fill="#242424" rx="1"/>
<rect x="649.72" y="379.2" width="9.4" height="24.8" fill="#eeeeee" rx="0.6"/>
<rect x="651.72" y="390.8" width="5.5" height="1.6" fill="#3a3a3a"/>
<rect x="639.32" y="489.2" width="29.5" height="20.8" fill="#262626"/>
<rect x="640.02" y="490" width="28" height="19.2" fill="#505050"/>
<rect x="682.56" y="322" width="2.4" height="139" fill="#1a1a1a"/>
<rect x="678.56" y="378.8" width="10.2" height="25.6" fill="#242424" rx="1"/>
<rect x="678.96" y="379.2" width="9.4" height="24.8" fill="#eeeeee" rx="0.6"/>
<rect x="680.96" y="390.8" width="5.5" height="1.6" fill="#3a3a3a"/>
<rect x="668.56" y="489.2" width="29.5" height="20.8" fill="#262626"/>
<rect x="669.26" y="490" width="28" height="19.2" fill="#505050"/>
<rect x="711.8" y="322" width="2.4" height="139" fill="#1a1a1a"/>
<rect x="707.8" y="378.8" width="10.2" height="25.6" fill="#242424" rx="1"/>
<rect x="708.2" y="379.2" width="9.4" height="24.8" fill="#eeeeee" rx="0.6"/>
<rect x="710.2" y="390.8" width="5.5" height="1.6" fill="#3a3a3a"/>
<rect x="697.8" y="489.2" width="29.5" height="20.8" fill="#262626"/>
<rect x="698.5" y="490" width="28" height="19.2" fill="#505050"/>
<rect x="741.04" y="322" width="2.4" height="139" fill="#1a1a1a"/>
<rect x="737.04" y="378.8" width="10.2" height="25.6" fill="#242424" rx="1"/>
<rect x="737.44" y="379.2" width="9.4" height="24.8" fill="#eeeeee" rx="0.6"/>
<rect x="739.44" y="390.8" width="5.5" height="1.6" fill="#3a3a3a"/>
<rect x="727.04" y="489.2" width="29.5" height="20.8" fill="#262626"/>
<rect x="727.74" y="490" width="28" height="19.2" fill="#505050"/>
<rect x="770.28" y="322" width="2.4" height="139" fill="#1a1a1a"/>
<rect x="765.88" y="391.2" width="3.8" height="1" fill="#6a6a6a"/>
<rect x="773.28" y="391.2" width="3.8" height="1" fill="#6a6a6a"/>
<rect x="766.28" y="362.7" width="10.2" height="25.6" fill="#242424" rx="1"/>
<rect x="766.68" y="363.1" width="9.4" height="24.8" fill="#eeeeee" rx="0.6"/>
<rect x="768.68" y="374.7" width="5.5" height="1.6" fill="#3a3a3a"/>
<rect x="756.28" y="489.2" width="29.5" height="20.8" fill="#262626"/>
<rect x="756.98" y="490" width="28" height="19.2" fill="#505050"/>
<rect x="799.52" y="322" width="2.4" height="139" fill="#1a1a1a"/>
<rect x="795.52" y="378.8" width="10.2" height="25.6" fill="#242424" rx="1"/>
<rect x="795.92" y="379.2" width="9.4" height="24.8" fill="#eeeeee" rx="0.6"/>
<rect x="797.92" y="390.8" width="5.5" height="1.6" fill="#3a3a3a"/>
<rect x="785.52" y="489.2" width="29.5" height="20.8" fill="#262626"/>
<rect x="786.22" y="490" width="28" height="19.2" fill="#505050"/>
<rect x="828.76" y="322" width="2.4" height="139" fill="#1a1a1a"/>
<rect x="824.36" y="391.2" width="3.8" height="1" fill="#6a6a6a"/>
<rect x="831.76" y="391.2" width="3.8" height="1" fill="#6a6a6a"/>
<rect x="824.76" y="364.6" width="10.2" height="25.6" fill="#242424" rx="1"/>
<rect x="825.16" y="365" width="9.4" height="24.8" fill="#eeeeee" rx="0.6"/>
<rect x="827.16" y="376.6" width="5.5" height="1.6" fill="#3a3a3a"/>
<rect x="814.76" y="489.2" width="29.5" height="20.8" fill="#262626"/>
<rect x="815.46" y="490" width="28" height="19.2" fill="#505050"/>
<rect x="858" y="322" width="2.4" height="139" fill="#1a1a1a"/>
<rect x="854" y="378.8" width="10.2" height="25.6" fill="#242424" rx="1"/>
<rect x="854.4" y="379.2" width="9.4" height="24.8" fill="#eeeeee" rx="0.6"/>
<rect x="856.4" y="390.8" width="5.5" height="1.6" fill="#3a3a3a"/>
<rect x="844" y="489.2" width="29.5" height="20.8" fill="#262626"/>
<rect x="844.7" y="490" width="28" height="19.2" fill="#505050"/>
<rect x="887.24" y="322" width="2.4" height="139" fill="#1a1a1a"/>
<rect x="883.24" y="378.8" width="10.2" height="25.6" fill="#242424" rx="1"/>
<rect x="883.64" y="379.2" width="9.4" height="24.8" fill="#eeeeee" rx="0.6"/>
<rect x="885.64" y="390.8" width="5.5" height="1.6" fill="#3a3a3a"/>
<rect x="873.24" y="489.2" width="29.5" height="20.8" fill="#262626"/>
<rect x="873.94" y="490" width="28" height="19.2" fill="#505050"/>
<rect x="916.48" y="322" width="2.4" height="139" fill="#1a1a1a"/>
<rect x="912.48" y="378.8" width="10.2" height="25.6" fill="#242424" rx="1"/>
<rect x="912.88" y="379.2" width="9.4" height="24.8" fill="#eeeeee" rx="0.6"/>
<rect x="914.88" y="390.8" width="5.5" height="1.6" fill="#3a3a3a"/>
<rect x="902.48" y="489.2" width="29.5" height="20.8" fill="#262626"/>
<rect x="903.18" y="490" width="28" height="19.2" fill="#505050"/>
<rect x="945.72" y="322" width="2.4" height="139" fill="#1a1a1a"/>
<rect x="941.32" y="391.2" width="3.8" height="1" fill="#6a6a6a"/>
<rect x="948.72" y="391.2" width="3.8" height="1" fill="#6a6a6a"/>
<rect x="941.72" y="399.3" width="10.2" height="25.6" fill="#242424" rx="1"/>
<rect x="942.12" y="399.7" width="9.4" height="24.8" fill="#eeeeee" rx="0.6"/>
<rect x="944.12" y="411.3" width="5.5" height="1.6" fill="#3a3a3a"/>
<rect x="931.72" y="489.2" width="29.5" height="20.8" fill="#262626"/>
<rect x="932.42" y="490" width="28" height="19.2" fill="#505050"/>
<rect x="974.96" y="322" width="2.4" height="139" fill="#1a1a1a"/>
<rect x="970.56" y="391.2" width="3.8" height="1" fill="#6a6a6a"/>
<rect x="977.96" y="391.2" width="3.8" height="1" fill="#6a6a6a"/>
<rect x="970.96" y="398.1" width="10.2" height="25.6" fill="#242424" rx="1"/>
<rect x="971.36" y="398.5" width="9.4" height="24.8" fill="#eeeeee" rx="0.6"/>
<rect x="973.36" y="410.1" width="5.5" height="1.6" fill="#3a3a3a"/>
<rect x="960.96" y="489.2" width="29.5" height="20.8" fill="#262626"/>
<rect x="961.66" y="490" width="28" height="19.2" fill="#505050"/>
<rect x="1004.2" y="322" width="2.4" height="139" fill="#1a1a1a"/>
<rect x="999.8" y="391.2" width="3.8" height="1" fill="#6a6a6a"/>
<rect x="1007.2" y="391.2" width="3.8" height="1" fill="#6a6a6a"/>
<rect x="1000.2" y="412.3" width="10.2" height="25.6" fill="#242424" rx="1"/>
<rect x="1000.6" y="412.7" width="9.4" height="24.8" fill="#eeeeee" rx="0.6"/>
<rect x="1002.6" y="424.3" width="5.5" height="1.6" fill="#3a3a3a"/>
<rect x="990.2" y="489.2" width="29.5" height="20.8" fill="#262626"/>
<rect x="990.9" y="490" width="28" height="19.2" fill="#505050"/>
<rect x="113" y="515.2" width="93.4" height="20.8" fill="#262626"/>
<rect x="114" y="516.2" width="91.4" height="18.8" fill="#505050"/>
<rect x="210" y="515.2" width="93.9" height="20.8" fill="#262626"/>
<rect x="211" y="516.2" width="91.9" height="18.8" fill="#505050"/>
</svg>
<div class="t" style="left:8.06px;top:8px;font-size:11px;color:#e6e6e6;transform:scale(1.027,1)">&#8801;</div>
<div class="t" style="left:17.30px;top:9px;font-size:8.5px;color:#f0f0f0;transform:scaleX(0.906)">File</div>
<div class="t" style="left:986.30px;top:9px;font-size:8.5px;color:#f2f2f2;transform:scaleX(0.920)">Online</div>
<div class="t" style="left:44.00px;top:56px;font-size:10.5px;color:#f0f0f0;transform:scaleX(0.877)">Rack</div>
<div class="t" style="left:142.00px;top:56px;font-size:10.5px;color:#f0f0f0;transform:scaleX(0.842)">Amplifier</div>
<div class="t" style="left:237.00px;top:56px;font-size:10.5px;color:#f0f0f0;transform:scaleX(0.881)">Configuration</div>
<div class="t" style="left:353.00px;top:56px;font-size:10.5px;color:#f0f0f0;transform:scaleX(0.852)">Controls</div>
<div class="t" style="left:455.00px;top:56px;font-size:10.5px;color:#f0f0f0;transform:scaleX(0.867)">Operation</div>
<div class="t" style="left:557.00px;top:56px;font-size:10.5px;color:#f0f0f0;transform:scaleX(0.857)">Supervision</div>
<div class="t" style="left:16.00px;top:90px;font-size:8.8px;color:#f0f0f0;transform:scaleX(0.873)">Filter f&uuml;r Messungen</div>
<div class="t" style="left:11.60px;top:111px;font-size:9px;color:#f0f0f0;transform:scaleX(0.820)">GEQ</div>
<div class="t" style="left:43.50px;top:111px;font-size:9px;color:#f0f0f0;transform:scaleX(0.831)">PEQ</div>
<div class="t" style="left:71.00px;top:111px;font-size:9px;color:#f0f0f0;transform:scaleX(0.860)">DELAY</div>
<div class="t" style="left:32.50px;top:143px;font-size:6px;color:#c4c4c4;transform:scaleX(0.790)">0</div>
<div class="t" style="left:32.50px;top:201px;font-size:6px;color:#c4c4c4;transform:scaleX(0.790)">-5</div>
<div class="t" style="left:32.50px;top:249px;font-size:6px;color:#c4c4c4;transform:scaleX(0.790)">-10</div>
<div class="t" style="left:32.50px;top:289px;font-size:6px;color:#c4c4c4;transform:scaleX(0.790)">-15</div>
<div class="t" style="left:32.50px;top:321px;font-size:6px;color:#c4c4c4;transform:scaleX(0.790)">-20</div>
<div class="t" style="left:32.50px;top:348px;font-size:6px;color:#c4c4c4;transform:scaleX(0.790)">-25</div>
<div class="t" style="left:32.50px;top:403px;font-size:6px;color:#c4c4c4;transform:scaleX(0.790)">-40</div>
<div class="t" style="left:32.50px;top:441px;font-size:6px;color:#c4c4c4;transform:scaleX(0.790)">-60</div>
<div class="t" style="left:32.50px;top:458px;font-size:6px;color:#c4c4c4;transform:scaleX(0.790)">-80</div>
<div class="t" style="left:83.20px;top:146px;font-size:6px;color:#c4c4c4;transform:scaleX(0.790)">0</div>
<div class="t" style="left:79.70px;top:208px;font-size:6px;color:#c4c4c4;transform:scaleX(0.790)">-10</div>
<div class="t" style="left:79.70px;top:270px;font-size:6px;color:#c4c4c4;transform:scaleX(0.790)">-20</div>
<div class="t" style="left:79.70px;top:332px;font-size:6px;color:#c4c4c4;transform:scaleX(0.790)">-30</div>
<div class="t" style="left:79.70px;top:394px;font-size:6px;color:#c4c4c4;transform:scaleX(0.790)">-40</div>
<div class="t" style="left:79.70px;top:456px;font-size:6px;color:#c4c4c4;transform:scaleX(0.790)">-50</div>
<div class="t" style="left:56.00px;top:471px;font-size:6px;color:#e0e0e0;transform:scaleX(0.790)">IN</div>
<div class="t" style="left:64.50px;top:471px;font-size:6px;color:#e0e0e0;transform:scaleX(0.790)">OUT</div>
<div class="t" style="left:40.00px;top:496px;font-size:9px;color:#f0f0f0;transform:scaleX(0.876)">0.0 dB</div>
<div class="t" style="left:40.60px;top:516px;font-size:9px;color:#f0f0f0;transform:scaleX(0.855)">MUTE</div>
<div class="t" style="left:113.00px;top:87px;font-size:9px;color:#9a9a9a;transform:scaleX(0.913)">Delay</div>
<div class="t" style="left:251.70px;top:104px;font-size:9px;color:#f0f0f0;transform:scaleX(0.846)">0 ms</div>
<div class="t" style="left:293.00px;top:87px;font-size:9px;color:#9a9a9a;transform:scaleX(0.891)">Delay Unit</div>
<div class="t" style="left:300.20px;top:103px;font-size:9.5px;color:#f0f0f0;transform:scaleX(0.746)">m</div>
<div class="t" style="left:332.00px;top:103px;font-size:9.5px;color:#f0f0f0;transform:scaleX(0.738)">ft</div>
<div class="t" style="left:359.80px;top:103px;font-size:9.5px;color:#f0f0f0;transform:scaleX(0.805)">ms</div>
<div class="t" style="left:395.90px;top:87px;font-size:9px;color:#9a9a9a;transform:scaleX(0.865)">Delay Bypass</div>
<div class="t" style="left:411.40px;top:104px;font-size:9px;color:#f0f0f0;transform:scaleX(0.843)">BYPASS</div>
<div class="t" style="left:107.85px;top:272px;font-size:6px;color:#c4c4c4;transform:scaleX(0.790)">-30</div>
<div class="t" style="left:107.85px;top:250px;font-size:6px;color:#c4c4c4;transform:scaleX(0.790)">-20</div>
<div class="t" style="left:107.85px;top:228px;font-size:6px;color:#c4c4c4;transform:scaleX(0.790)">-10</div>
<div class="t" style="left:112.06px;top:206px;font-size:6px;color:#c4c4c4;transform:scaleX(0.790)">0</div>
<div class="t" style="left:109.43px;top:184px;font-size:6px;color:#c4c4c4;transform:scaleX(0.790)">10</div>
<div class="t" style="left:109.43px;top:162px;font-size:6px;color:#c4c4c4;transform:scaleX(0.790)">20</div>
<div class="t" style="left:109.43px;top:140px;font-size:6px;color:#c4c4c4;transform:scaleX(0.790)">30</div>
<div class="t" style="left:172.96px;top:295px;font-size:6px;color:#c4c4c4;transform:scaleX(0.790)">30</div>
<div class="t" style="left:210.07px;top:295px;font-size:6px;color:#c4c4c4;transform:scaleX(0.790)">40</div>
<div class="t" style="left:238.85px;top:295px;font-size:6px;color:#c4c4c4;transform:scaleX(0.790)">50</div>
<div class="t" style="left:262.37px;top:295px;font-size:6px;color:#c4c4c4;transform:scaleX(0.790)">60</div>
<div class="t" style="left:282.25px;top:295px;font-size:6px;color:#c4c4c4;transform:scaleX(0.790)">70</div>
<div class="t" style="left:299.48px;top:295px;font-size:6px;color:#c4c4c4;transform:scaleX(0.790)">80</div>
<div class="t" style="left:314.67px;top:295px;font-size:6px;color:#c4c4c4;transform:scaleX(0.790)">90</div>
<div class="t" style="left:326.94px;top:295px;font-size:6px;color:#c4c4c4;transform:scaleX(0.790)">100</div>
<div class="t" style="left:416.35px;top:295px;font-size:6px;color:#c4c4c4;transform:scaleX(0.790)">200</div>
<div class="t" style="left:468.65px;top:295px;font-size:6px;color:#c4c4c4;transform:scaleX(0.790)">300</div>
<div class="t" style="left:505.75px;top:295px;font-size:6px;color:#c4c4c4;transform:scaleX(0.790)">400</div>
<div class="t" style="left:534.54px;top:295px;font-size:6px;color:#c4c4c4;transform:scaleX(0.790)">500</div>
<div class="t" style="left:558.05px;top:295px;font-size:6px;color:#c4c4c4;transform:scaleX(0.790)">600</div>
<div class="t" style="left:577.94px;top:295px;font-size:6px;color:#c4c4c4;transform:scaleX(0.790)">700</div>
<div class="t" style="left:595.16px;top:295px;font-size:6px;color:#c4c4c4;transform:scaleX(0.790)">800</div>
<div class="t" style="left:610.35px;top:295px;font-size:6px;color:#c4c4c4;transform:scaleX(0.790)">900</div>
<div class="t" style="left:622.62px;top:295px;font-size:6px;color:#c4c4c4;transform:scaleX(0.790)">1000</div>
<div class="t" style="left:712.03px;top:295px;font-size:6px;color:#c4c4c4;transform:scaleX(0.790)">2000</div>
<div class="t" style="left:764.33px;top:295px;font-size:6px;color:#c4c4c4;transform:scaleX(0.790)">3000</div>
<div class="t" style="left:801.43px;top:295px;font-size:6px;color:#c4c4c4;transform:scaleX(0.790)">4000</div>
<div class="t" style="left:830.21px;top:295px;font-size:6px;color:#c4c4c4;transform:scaleX(0.790)">5000</div>
<div class="t" style="left:853.73px;top:295px;font-size:6px;color:#c4c4c4;transform:scaleX(0.790)">6000</div>
<div class="t" style="left:873.61px;top:295px;font-size:6px;color:#c4c4c4;transform:scaleX(0.790)">7000</div>
<div class="t" style="left:890.84px;top:295px;font-size:6px;color:#c4c4c4;transform:scaleX(0.790)">8000</div>
<div class="t" style="left:918.30px;top:295px;font-size:6px;color:#c4c4c4;transform:scaleX(0.790)">10000</div>
<div class="t" style="left:105.73px;top:325px;font-size:6px;color:#c4c4c4;transform:scaleX(0.790)">10</div>
<div class="t" style="left:108.36px;top:357px;font-size:6px;color:#c4c4c4;transform:scaleX(0.790)">5</div>
<div class="t" style="left:108.36px;top:389px;font-size:6px;color:#c4c4c4;transform:scaleX(0.790)">0</div>
<div class="t" style="left:106.79px;top:421px;font-size:6px;color:#c4c4c4;transform:scaleX(0.790)">-5</div>
<div class="t" style="left:104.15px;top:453px;font-size:6px;color:#c4c4c4;transform:scaleX(0.790)">-10</div>
<div class="t" style="left:125.06px;top:479px;font-size:6px;color:#e0e0e0;transform:scaleX(0.790)">20</div>
<div class="t" style="left:125.20px;top:495px;font-size:9px;color:#f0f0f0;transform:scaleX(0.833)">B</div>
<div class="t" style="left:154.30px;top:479px;font-size:6px;color:#e0e0e0;transform:scaleX(0.790)">25</div>
<div class="t" style="left:154.44px;top:495px;font-size:9px;color:#f0f0f0;transform:scaleX(0.833)">B</div>
<div class="t" style="left:183.54px;top:479px;font-size:6px;color:#e0e0e0;transform:scaleX(0.790)">32</div>
<div class="t" style="left:183.68px;top:495px;font-size:9px;color:#f0f0f0;transform:scaleX(0.833)">B</div>
<div class="t" style="left:212.78px;top:479px;font-size:6px;color:#e0e0e0;transform:scaleX(0.790)">40</div>
<div class="t" style="left:212.92px;top:495px;font-size:9px;color:#f0f0f0;transform:scaleX(0.833)">B</div>
<div class="t" style="left:242.02px;top:479px;font-size:6px;color:#e0e0e0;transform:scaleX(0.790)">50</div>
<div class="t" style="left:242.16px;top:495px;font-size:9px;color:#f0f0f0;transform:scaleX(0.833)">B</div>
<div class="t" style="left:271.26px;top:479px;font-size:6px;color:#e0e0e0;transform:scaleX(0.790)">63</div>
<div class="t" style="left:271.40px;top:495px;font-size:9px;color:#f0f0f0;transform:scaleX(0.833)">B</div>
<div class="t" style="left:300.50px;top:479px;font-size:6px;color:#e0e0e0;transform:scaleX(0.790)">80</div>
<div class="t" style="left:300.64px;top:495px;font-size:9px;color:#f0f0f0;transform:scaleX(0.833)">B</div>
<div class="t" style="left:328.43px;top:479px;font-size:6px;color:#e0e0e0;transform:scaleX(0.790)">100</div>
<div class="t" style="left:329.88px;top:495px;font-size:9px;color:#f0f0f0;transform:scaleX(0.833)">B</div>
<div class="t" style="left:357.67px;top:479px;font-size:6px;color:#e0e0e0;transform:scaleX(0.790)">125</div>
<div class="t" style="left:359.12px;top:495px;font-size:9px;color:#f0f0f0;transform:scaleX(0.833)">B</div>
<div class="t" style="left:386.91px;top:479px;font-size:6px;color:#e0e0e0;transform:scaleX(0.790)">160</div>
<div class="t" style="left:388.36px;top:495px;font-size:9px;color:#f0f0f0;transform:scaleX(0.833)">B</div>
<div class="t" style="left:416.15px;top:479px;font-size:6px;color:#e0e0e0;transform:scaleX(0.790)">200</div>
<div class="t" style="left:417.60px;top:495px;font-size:9px;color:#f0f0f0;transform:scaleX(0.833)">B</div>
<div class="t" style="left:445.39px;top:479px;font-size:6px;color:#e0e0e0;transform:scaleX(0.790)">250</div>
<div class="t" style="left:446.84px;top:495px;font-size:9px;color:#f0f0f0;transform:scaleX(0.833)">B</div>
<div class="t" style="left:474.63px;top:479px;font-size:6px;color:#e0e0e0;transform:scaleX(0.790)">315</div>
<div class="t" style="left:476.08px;top:495px;font-size:9px;color:#f0f0f0;transform:scaleX(0.833)">B</div>
<div class="t" style="left:503.87px;top:479px;font-size:6px;color:#e0e0e0;transform:scaleX(0.790)">400</div>
<div class="t" style="left:505.32px;top:495px;font-size:9px;color:#f0f0f0;transform:scaleX(0.833)">B</div>
<div class="t" style="left:533.11px;top:479px;font-size:6px;color:#e0e0e0;transform:scaleX(0.790)">500</div>
<div class="t" style="left:534.56px;top:495px;font-size:9px;color:#f0f0f0;transform:scaleX(0.833)">B</div>
<div class="t" style="left:562.35px;top:479px;font-size:6px;color:#e0e0e0;transform:scaleX(0.790)">630</div>
<div class="t" style="left:563.80px;top:495px;font-size:9px;color:#f0f0f0;transform:scaleX(0.833)">B</div>
<div class="t" style="left:591.59px;top:479px;font-size:6px;color:#e0e0e0;transform:scaleX(0.790)">800</div>
<div class="t" style="left:593.04px;top:495px;font-size:9px;color:#f0f0f0;transform:scaleX(0.833)">B</div>
<div class="t" style="left:619.51px;top:479px;font-size:6px;color:#e0e0e0;transform:scaleX(0.790)">1000</div>
<div class="t" style="left:622.28px;top:495px;font-size:9px;color:#f0f0f0;transform:scaleX(0.833)">B</div>
<div class="t" style="left:648.75px;top:479px;font-size:6px;color:#e0e0e0;transform:scaleX(0.790)">1250</div>
<div class="t" style="left:651.52px;top:495px;font-size:9px;color:#f0f0f0;transform:scaleX(0.833)">B</div>
<div class="t" style="left:677.99px;top:479px;font-size:6px;color:#e0e0e0;transform:scaleX(0.790)">1600</div>
<div class="t" style="left:680.76px;top:495px;font-size:9px;color:#f0f0f0;transform:scaleX(0.833)">B</div>
<div class="t" style="left:707.23px;top:479px;font-size:6px;color:#e0e0e0;transform:scaleX(0.790)">2000</div>
<div class="t" style="left:710.00px;top:495px;font-size:9px;color:#f0f0f0;transform:scaleX(0.833)">B</div>
<div class="t" style="left:736.47px;top:479px;font-size:6px;color:#e0e0e0;transform:scaleX(0.790)">2500</div>
<div class="t" style="left:739.24px;top:495px;font-size:9px;color:#f0f0f0;transform:scaleX(0.833)">B</div>
<div class="t" style="left:765.71px;top:479px;font-size:6px;color:#e0e0e0;transform:scaleX(0.790)">3150</div>
<div class="t" style="left:768.48px;top:495px;font-size:9px;color:#f0f0f0;transform:scaleX(0.833)">B</div>
<div class="t" style="left:794.95px;top:479px;font-size:6px;color:#e0e0e0;transform:scaleX(0.790)">4000</div>
<div class="t" style="left:797.72px;top:495px;font-size:9px;color:#f0f0f0;transform:scaleX(0.833)">B</div>
<div class="t" style="left:824.19px;top:479px;font-size:6px;color:#e0e0e0;transform:scaleX(0.790)">5000</div>
<div class="t" style="left:826.96px;top:495px;font-size:9px;color:#f0f0f0;transform:scaleX(0.833)">B</div>
<div class="t" style="left:853.43px;top:479px;font-size:6px;color:#e0e0e0;transform:scaleX(0.790)">6300</div>
<div class="t" style="left:856.20px;top:495px;font-size:9px;color:#f0f0f0;transform:scaleX(0.833)">B</div>
<div class="t" style="left:882.67px;top:479px;font-size:6px;color:#e0e0e0;transform:scaleX(0.790)">8000</div>
<div class="t" style="left:885.44px;top:495px;font-size:9px;color:#f0f0f0;transform:scaleX(0.833)">B</div>
<div class="t" style="left:910.59px;top:479px;font-size:6px;color:#e0e0e0;transform:scaleX(0.790)">10000</div>
<div class="t" style="left:914.68px;top:495px;font-size:9px;color:#f0f0f0;transform:scaleX(0.833)">B</div>
<div class="t" style="left:939.83px;top:479px;font-size:6px;color:#e0e0e0;transform:scaleX(0.790)">12500</div>
<div class="t" style="left:943.92px;top:495px;font-size:9px;color:#f0f0f0;transform:scaleX(0.833)">B</div>
<div class="t" style="left:969.07px;top:479px;font-size:6px;color:#e0e0e0;transform:scaleX(0.790)">16000</div>
<div class="t" style="left:973.16px;top:495px;font-size:9px;color:#f0f0f0;transform:scaleX(0.833)">B</div>
<div class="t" style="left:998.31px;top:479px;font-size:6px;color:#e0e0e0;transform:scaleX(0.790)">20000</div>
<div class="t" style="left:1002.40px;top:495px;font-size:9px;color:#f0f0f0;transform:scaleX(0.833)">B</div>
<div class="t" style="left:136.50px;top:521px;font-size:9px;color:#f0f0f0;transform:scaleX(0.843)">BYPASS ALL</div>
<div class="t" style="left:240.50px;top:521px;font-size:9px;color:#f0f0f0;transform:scaleX(0.826)">FLATTEN</div>
</body></html>
